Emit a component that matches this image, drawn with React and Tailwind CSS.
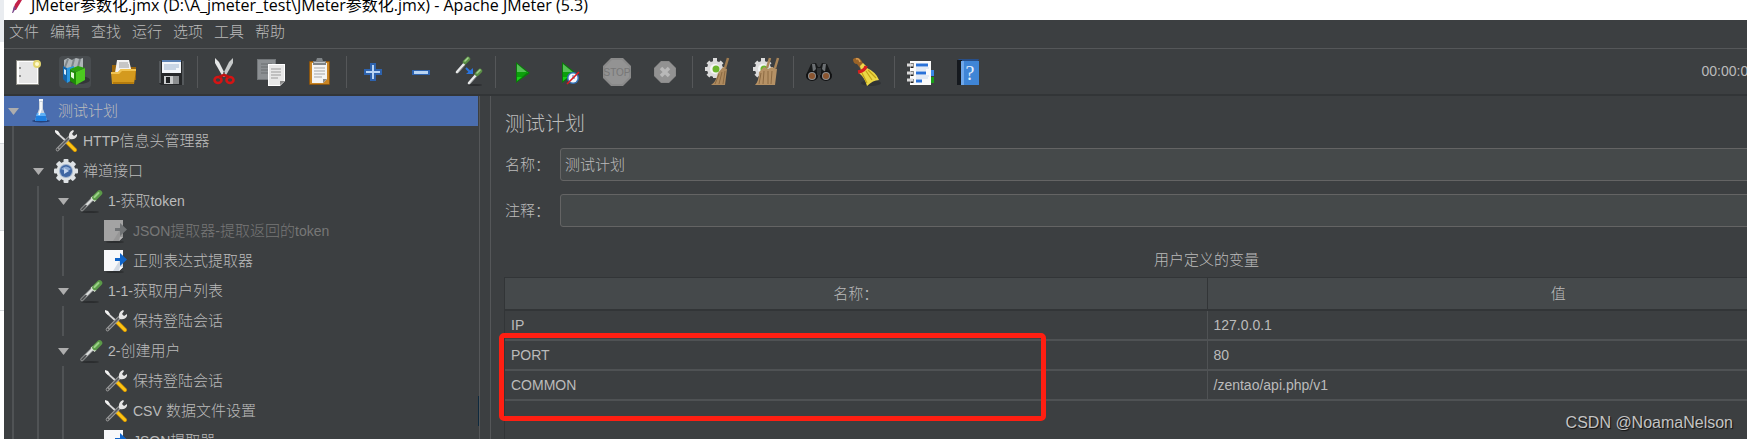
import clsx from "clsx";

const menus = ["文件", "编辑", "查找", "运行", "选项", "工具", "帮助"];

const treeRows = [
    { depth: 0, icon: "flask", label: "测试计划", open: true, selected: true },
    { depth: 1, icon: "tools", label: "HTTP信息头管理器" },
    { depth: 1, icon: "gear", label: "禅道接口", open: true },
    { depth: 2, icon: "dropper", label: "1-获取token", open: true },
    { depth: 3, icon: "extractor", label: "JSON提取器-提取返回的token", disabled: true },
    { depth: 3, icon: "extractor", label: "正则表达式提取器" },
    { depth: 2, icon: "dropper", label: "1-1-获取用户列表", open: true },
    { depth: 3, icon: "tools", label: "保持登陆会话" },
    { depth: 2, icon: "dropper", label: "2-创建用户", open: true },
    { depth: 3, icon: "tools", label: "保持登陆会话" },
    { depth: 3, icon: "tools", label: "CSV 数据文件设置", marked: true },
    { depth: 3, icon: "extractor", label: "JSON提取器" },
];

const variables = [
    { name: "IP", value: "127.0.0.1" },
    { name: "PORT", value: "80" },
    { name: "COMMON", value: "/zentao/api.php/v1" },
];

// Latin runs are set one size below the Chinese ones
function MixedText({ text }) {
    return text.split(/([\x21-\x7e]+)/).map((part, i) => (
        <span key={i} className={i % 2 ? "text-[14px]" : "text-[15px]"}>
            {part}
        </span>
    ));
}

function Svg({ size = 32, children }) {
    return (
        <svg
            width={size}
            height={size}
            viewBox={`0 0 ${size} ${size}`}
            className="block shrink-0"
            aria-hidden="true"
        >
            {children}
        </svg>
    );
}

/* Tree icons */

function FlaskIcon() {
    return (
        <Svg size={24}>
            <ellipse cx="12" cy="22" rx="9" ry="1.5" fill="#24427c" />
            <path d="M10 2h4v8l4 11q0 1-1 1H7q-1 0-1-1l4-11z" fill="#c9d3de" />
            <path d="M8 14h8l2 7q0 1-1 1H7q-1 0-1-1z" fill="#1f7fe0" />
            <path d="M8 14h8l1 3H7z" fill="#5fb0f5" />
            <path d="M10 0h4v2h-4z" fill="#f5f8fb" />
            <path d="M12 3v7l-2 6" stroke="#fff" strokeWidth="1.6" fill="none" />
        </Svg>
    );
}

function ToolsIcon() {
    return (
        <Svg size={24}>
            <path d="M2 3l10 9" stroke="#d9d9d9" strokeWidth="1.8" />
            <path d="M1 1l3 1 2 3-2 1-3-3z" fill="#f2f2f2" />
            <path d="M13 13l8 8" stroke="#c98a00" strokeWidth="4" strokeLinecap="round" />
            <path d="M13 13l8 8" stroke="#fcc414" strokeWidth="2.8" strokeLinecap="round" />
            <path d="M3.500 20.500L16 8" stroke="#9a9a9a" strokeWidth="3.600" strokeLinecap="round" />
            <path d="M5 19L15 9" stroke="#55585a" strokeWidth="1.400" />
            <circle cx="3.500" cy="20.500" r="1" fill="#3c3f41" />
            <path d="M15 9q-1-6 4-8l1 1-2 3 2 2 3-2 0 2q-2 4-7 3z" fill="#e4e4e4" />
        </Svg>
    );
}

function GearIcon() {
    return (
        <Svg size={24}>
            <g fill="#dfe3e6">
                <circle cx="12" cy="12" r="9.5" />
                <rect x="9.5" y="0" width="5" height="24" rx="1" />
                <rect x="0" y="9.5" width="24" height="5" rx="1" />
                <rect x="9.5" y="0" width="5" height="24" rx="1" transform="rotate(45 12 12)" />
                <rect x="9.5" y="0" width="5" height="24" rx="1" transform="rotate(-45 12 12)" />
            </g>
            <circle cx="12" cy="12" r="7" fill="#9fb2cc" />
            <circle cx="12" cy="12" r="6" fill="#3f66a3" />
            <path d="M7 10q5-5 10 0-4 3-10 0z" fill="#8daad3" />
            <path d="M10 9l5 3-5 3z" fill="#c3d5ee" />
        </Svg>
    );
}

function DropperIcon() {
    return (
        <Svg size={24}>
            <ellipse cx="11" cy="23" rx="9" ry="1" fill="#2b2d2f" />
            <path d="M3 20.500L13 10.500" stroke="#8a8c8d" strokeWidth="3.600" strokeLinecap="round" />
            <path d="M7 16.500L13 10.500" stroke="#dcdedd" strokeWidth="2.200" strokeLinecap="round" />
            <path d="M3 20.500l4-4" stroke="#4a4c4e" strokeWidth="1.600" strokeLinecap="round" />
            <path d="M12.500 8l4 4" stroke="#dfe8da" strokeWidth="2.600" />
            <path d="M16 8.500l4.500-4.500" stroke="#5b9a48" strokeWidth="5.500" strokeLinecap="round" />
            <path d="M15.500 8l4-4" stroke="#9ad186" strokeWidth="2" strokeLinecap="round" />
        </Svg>
    );
}

function ExtractorIcon({ disabled }) {
    return (
        <Svg size={24}>
            <ellipse cx="11" cy="23" rx="9" ry="1" fill="#2b2d2f" />
            <path d="M0 1h19v17l-4 4H0z" fill={disabled ? "#a3a3a3" : "#f7f8fa"} />
            <path d="M9 22L19 6v12l-4 4z" fill={disabled ? "#969696" : "#d3dae4"} />
            <path d="M15 22l1-4h3z" fill={disabled ? "#b5b5b5" : "#fff"} />
            <path
                d="M11 9h5V4l7 6.500-7 6.500v-5h-5z"
                fill={disabled ? "#707375" : "#1064c8"}
            />
        </Svg>
    );
}

/* Toolbar icons */

function NewIcon() {
    return (
        <Svg>
            <rect x="5" y="4" width="23" height="25" fill="#8e8e88" />
            <rect x="6" y="5" width="21" height="23" fill="#fff" />
            <rect x="8" y="6" width="18" height="21" fill="#e6e6e6" />
            <circle cx="9" cy="12" r="1" fill="#777" />
            <circle cx="9" cy="20" r="1" fill="#777" />
            <circle cx="26" cy="8" r="4" fill="#e3d671" />
            <circle cx="26" cy="8" r="2" fill="#fffbd0" />
        </Svg>
    );
}

function TemplatesIcon() {
    return (
        <Svg>
            <ellipse cx="20" cy="24" rx="11" ry="4" fill="#333638" />
            <path d="M5 4l4-2 4 2 4-2 4 1 3-1v10H5z" fill="#b0b6b9" />
            <path d="M9 3l-3 8M15 3l-2 8M21 3l-2 8" stroke="#7d8589" strokeWidth="2" />
            <path d="M4 10l4 2v15l-4-4z" fill="#1464a8" />
            <path d="M8 12l7-2v13l-7 4z" fill="#2b98e0" />
            <path d="M5 13l2 1v5l-2-1z" fill="#d7ecfa" />
            <path d="M11 13l6 3v13l-6-4z" fill="#1f8a08" />
            <path d="M17 16l9-4v12l-9 5z" fill="#4cc91f" />
            <path d="M11 13l8-3 7 2-9 4z" fill="#2ba30c" />
            <path d="M12 16l3 1v6l-3-2z" fill="#e3f8da" />
        </Svg>
    );
}

function OpenIcon() {
    return (
        <Svg>
            <path d="M5 9h8l2 2h14v13H5z" fill="#99650c" />
            <path d="M10 4h12l3 13H8z" fill="#f2f2f2" />
            <path d="M12 7h9M12 9h10M12 11h10" stroke="#9a9a9a" strokeWidth="1" />
            <path d="M4 16h7l3-3h15l-2 15H5z" fill="#d49a1e" />
            <path d="M4 16h7l3-3h15v2H15l-3 3H4z" fill="#f0c352" />
            <path d="M6 26h21l-.300 2H6z" fill="#b57c0e" />
        </Svg>
    );
}

function SaveIcon() {
    return (
        <Svg>
            <path d="M4 5h25v24H6l-2-2z" fill="#26282a" />
            <path d="M4 5h2v22H4zM27 5h2v24h-2z" fill="#55595c" />
            <rect x="7" y="4" width="19" height="13" fill="#f3f6fa" />
            <rect x="7" y="4" width="19" height="2" fill="#5c82b5" />
            <path d="M9 9h15M9 11h15M9 13h12" stroke="#9db4d0" strokeWidth="1" />
            <rect x="9" y="20" width="15" height="8" fill="#c9cbcc" />
            <rect x="11" y="21" width="4" height="6" fill="#202224" />
            <rect x="18" y="20" width="6" height="8" fill="#8b8e90" />
        </Svg>
    );
}

function CutIcon() {
    return (
        <Svg>
            <path d="M7 2l4 4 7 14-3 1L7 7z" fill="#e4e6e6" />
            <path d="M25 2l-4 4-7 14 3 1 8-14z" fill="#c6c9c9" />
            <circle cx="16" cy="17" r="1" fill="#555" />
            <ellipse cx="10" cy="24" rx="3.500" ry="3" fill="none" stroke="#d51414" strokeWidth="2.600" />
            <ellipse cx="22" cy="24" rx="3.500" ry="3" fill="none" stroke="#d51414" strokeWidth="2.600" />
            <path d="M11 21l5-2 5 2" stroke="#c01010" strokeWidth="2.600" fill="none" />
        </Svg>
    );
}

function CopyIcon() {
    return (
        <Svg>
            <rect x="1" y="3" width="19" height="21" fill="#73777a" />
            <rect x="2" y="4" width="17" height="19" fill="#8c9093" />
            <path d="M5 8h11M5 11h11M5 14h11M5 17h8" stroke="#6a6e70" strokeWidth="1" />
            <path d="M12 8h17v17l-5 5H12z" fill="#fff" />
            <path d="M13 9h15v15l-4 5H13z" fill="#e8e8e8" />
            <path d="M15 13h10M15 16h10M15 19h10M15 22h7" stroke="#9a9a9a" strokeWidth="1" />
            <path d="M24 29v-4h5z" fill="#8a8a8a" />
        </Svg>
    );
}

function PasteIcon() {
    return (
        <Svg>
            <rect x="5" y="5" width="21" height="24" rx="1" fill="#8a5510" />
            <rect x="6" y="6" width="19" height="22" fill="#c98524" />
            <path d="M8 7h15v16l-4 4H8z" fill="#f4f4f4" />
            <path d="M19 27v-4h4z" fill="#8b8b8b" />
            <path d="M10 12h11M10 15h11M10 18h11M10 21h8" stroke="#a5a5a5" strokeWidth="1" />
            <path d="M9 5h3l1-3h5l1 3h3v4H9z" fill="#7f8487" />
            <path d="M10 6h11v1H10z" fill="#c6cacc" />
        </Svg>
    );
}

function PlusIcon() {
    return (
        <Svg>
            <path d="M13 7h6v6h6v6h-6v6h-6v-6H7v-6h6z" fill="#2d62ad" />
            <path d="M15 9h2v6h6v2h-6v6h-2v-6H9v-2h6z" fill="#b8d4f3" />
        </Svg>
    );
}

function MinusIcon() {
    return (
        <Svg>
            <rect x="7" y="14" width="18" height="5" fill="#2d62ad" />
            <rect x="9" y="15" width="14" height="3" fill="#b8d4f3" />
        </Svg>
    );
}

function ToggleIcon() {
    return (
        <Svg>
            <ellipse cx="22" cy="29" rx="7" ry="1" fill="#2b2d2f" />
            <path d="M4 16l7-8M16 27l7-8" stroke="#e8eaea" strokeWidth="2.600" strokeLinecap="round" />
            <path d="M5 17l7-8M17 28l7-8" stroke="#8f9292" strokeWidth="1" />
            <path d="M12 6l3-3M24 18l3-3" stroke="#5a8f45" strokeWidth="4.500" strokeLinecap="round" />
            <path d="M12 5l3-3M24 17l3-3" stroke="#a3d08e" strokeWidth="1.600" strokeLinecap="round" />
            <path d="M13 12l4 4" stroke="#2b74dd" strokeWidth="2" />
            <path d="M20 12v6h-7z" fill="#2b74dd" />
        </Svg>
    );
}

function PlayShape() {
    return (
        <>
            <path d="M10 6l14 11-14 10z" fill="#0a7a0a" />
            <path d="M11 8l11 9H11z" fill="#55c155" />
            <path d="M11 16h11l-11 9z" fill="#0c9f0c" />
            <path d="M11 21h5l-5 4z" fill="#17cf17" />
        </>
    );
}

function StartIcon() {
    return (
        <Svg>
            <PlayShape />
        </Svg>
    );
}

function StartNoPausesIcon() {
    return (
        <Svg>
            <g transform="translate(-2 0)">
                <PlayShape />
            </g>
            <circle cx="19" cy="22" r="6" fill="#3572b8" />
            <circle cx="19" cy="22" r="4.500" fill="#f4f7fb" />
            <path d="M19 19v3h2" stroke="#3572b8" strokeWidth="1" fill="none" />
            <path d="M13 28l12-12" stroke="#dc1b1b" strokeWidth="1.600" />
        </Svg>
    );
}

function StopIcon() {
    return (
        <Svg>
            <path d="M9 2h12l8 8v12l-8 8H9l-8-8V10z" fill="#8a8a8a" />
            <path d="M10 4h10l7 7v10l-7 7H10l-7-7V11z" fill="#939393" />
            <text
                x="15"
                y="20"
                textAnchor="middle"
                fontSize="10"
                fill="#777"
                fontFamily="Liberation Sans, sans-serif"
            >
                STOP
            </text>
        </Svg>
    );
}

function ShutdownIcon() {
    return (
        <Svg>
            <path d="M11 5h8l7 7v8l-7 7h-8l-7-7v-8z" fill="#8a8a8a" />
            <path d="M11 6h8l6 6v8l-6 6h-8l-6-6v-8z" fill="#929292" />
            <path d="M11 12l8 8M19 12l-8 8" stroke="#b8b8b8" strokeWidth="3.500" />
        </Svg>
    );
}

function GearPart() {
    return (
        <>
            <g fill="#dcdcdc">
                <circle cx="12" cy="13" r="8" />
                <rect x="10" y="2" width="4" height="20" />
                <rect x="2" y="11" width="20" height="4" />
                <rect x="10" y="3" width="4" height="20" transform="rotate(45 12 13)" />
                <rect x="10" y="3" width="4" height="20" transform="rotate(-45 12 13)" />
            </g>
            <circle cx="12" cy="13" r="5" fill="#f5f5f5" />
            <circle cx="13" cy="13" r="3.500" fill="#6cb52d" />
        </>
    );
}

function ClearIcon() {
    return (
        <Svg>
            <GearPart />
            <path d="M25 2l-3 10" stroke="#a07c50" strokeWidth="2.500" />
            <path d="M15 17l5-6 4 2-2 16H8q5-3 7-12z" fill="#ae8a5e" />
            <path d="M16 18l-4 10M19 16l-3 12M22 15l-2 13" stroke="#8c6a42" strokeWidth="1" />
        </Svg>
    );
}

function ClearAllIcon() {
    return (
        <Svg>
            <GearPart />
            <path d="M19 2l-3 10M27 2l-3 10" stroke="#a98559" strokeWidth="2.500" />
            <path d="M8 16l5-5 4 2 4-2 5 2-2 16H4q4-4 4-13z" fill="#b59165" />
            <path d="M10 17L8 28M13 15l-1 13M17 15v13M21 15l-1 13" stroke="#8c6a42" strokeWidth="1" />
        </Svg>
    );
}

function SearchIcon() {
    return (
        <Svg>
            <path d="M7 8l5-1 2 4h2l2-4 5 1 5 11H2z" fill="#17191a" />
            <path d="M8 8h3l1 5-3 3zM22 8h-3l-1 5 3 3z" fill="#6c7073" />
            <ellipse cx="8" cy="20" rx="6" ry="5" fill="#101112" />
            <ellipse cx="22" cy="20" rx="6" ry="5" fill="#101112" />
            <circle cx="8" cy="20" r="4" fill="#8e8e8e" />
            <circle cx="22" cy="20" r="4" fill="#8e8e8e" />
            <circle cx="8" cy="20" r="3" fill="#8a5530" />
            <circle cx="22" cy="20" r="3" fill="#8a5530" />
            <rect x="13" y="12" width="4" height="7" fill="#303335" />
        </Svg>
    );
}

function BroomIcon() {
    return (
        <Svg>
            <ellipse cx="19" cy="27" rx="10" ry="3" fill="#303335" />
            <path d="M1 3q5-3 8 1l3 5-4 3-3-4q-4 0-4-5z" fill="#9a6327" />
            <path d="M4 3q3-1 4 3" stroke="#d79b52" strokeWidth="1.500" fill="none" />
            <path d="M11 7l4 4-6 4-1-5z" fill="#f0d84a" />
            <path d="M15 12q9 4 12 12-6 0-12 6-2-8-8-13z" fill="#ecd846" />
            <path d="M14 15l6 9M16 14l8 8M10 17l5 10" stroke="#c2a316" strokeWidth="1.200" />
            <path d="M6 16q7-1 8-6" stroke="#d81f1f" strokeWidth="3.400" fill="none" />
        </Svg>
    );
}

function FunctionHelperIcon() {
    return (
        <Svg>
            <rect x="22" y="14" width="7" height="6" fill="#3a87e8" />
            <rect x="22" y="21" width="7" height="6" fill="#179b17" />
            <rect x="5" y="5" width="21" height="24" fill="#fafafa" />
            <path d="M7 7v20" stroke="#222" strokeWidth="3" strokeDasharray="5 3" />
            <path d="M2 9h6M2 17h6M2 24h6" stroke="#d9d9d9" strokeWidth="3" />
            <path d="M11 9h12M11 17h10M11 25h6" stroke="#2a72d8" strokeWidth="3" />
            <path d="M11 12h13M11 14h10M11 20h13M11 22h12" stroke="#c9d9ef" strokeWidth="1" />
        </Svg>
    );
}

function HelpIcon() {
    return (
        <Svg>
            <path d="M4 5l2-2h20l-1 2z" fill="#274e88" />
            <rect x="4" y="4" width="5" height="25" fill="#15191e" />
            <rect x="8" y="5" width="18" height="24" fill="#3f85d6" />
            <rect x="8" y="5" width="3" height="24" fill="#6ea7ea" />
            <text
                x="17"
                y="24"
                textAnchor="middle"
                fontSize="20"
                fill="#e4effb"
                fontFamily="Liberation Serif, serif"
            >
                ?
            </text>
        </Svg>
    );
}

const toolGroups = [
    [
        { label: "新建", Icon: NewIcon },
        { label: "模板", Icon: TemplatesIcon, active: true },
        { label: "打开", Icon: OpenIcon },
        { label: "保存", Icon: SaveIcon },
    ],
    [
        { label: "剪切", Icon: CutIcon },
        { label: "复制", Icon: CopyIcon },
        { label: "粘贴", Icon: PasteIcon },
    ],
    [
        { label: "展开", Icon: PlusIcon },
        { label: "折叠", Icon: MinusIcon },
        { label: "切换", Icon: ToggleIcon },
    ],
    [
        { label: "启动", Icon: StartIcon },
        { label: "不停顿开始", Icon: StartNoPausesIcon },
        { label: "停止", Icon: StopIcon, disabled: true },
        { label: "关闭", Icon: ShutdownIcon, disabled: true },
    ],
    [
        { label: "清除", Icon: ClearIcon },
        { label: "清除全部", Icon: ClearAllIcon },
    ],
    [
        { label: "搜索", Icon: SearchIcon },
        { label: "重置搜索", Icon: BroomIcon },
    ],
    [
        { label: "函数助手", Icon: FunctionHelperIcon },
        { label: "帮助", Icon: HelpIcon },
    ],
];

const treeIcons = {
    flask: FlaskIcon,
    tools: ToolsIcon,
    gear: GearIcon,
    dropper: DropperIcon,
    extractor: ExtractorIcon,
};

function Toolbar() {
    return (
        <div className="flex h-[47px] items-center border-b-2 border-[#323537] pr-[167px]">
            <div className="-ml-px flex items-center">
                {toolGroups.map((group, i) => (
                    <div key={i} className="flex items-center">
                        {i > 0 && <span className="mx-0.5 h-8 w-px bg-[#555759]" />}
                        {group.map(({ label, Icon, active, disabled }) => (
                            <button
                                key={label}
                                type="button"
                                aria-label={label}
                                disabled={disabled}
                                className={clsx("mx-2 rounded-sm", active && "bg-[#484c4f]")}
                            >
                                <Icon />
                            </button>
                        ))}
                    </div>
                ))}
            </div>
            <span className="ml-auto text-[14px]">00:00:00</span>
        </div>
    );
}

function TreeRow({ row }) {
    const Icon = treeIcons[row.icon];

    return (
        <li
            role="treeitem"
            aria-level={row.depth + 1}
            aria-selected={!!row.selected}
            aria-expanded={row.open}
            className={clsx(
                "flex h-[30px] items-center border-r pl-1",
                row.marked ? "border-[#0d293e]" : "border-[#3c3f41]",
                row.selected && "bg-[#4b6eaf]",
                row.disabled && "text-[#777777]"
            )}
        >
            {Array.from({ length: row.depth }, (_, i) => (
                <span key={i} className="h-full w-[25px] shrink-0 pl-1">
                    <span className="block h-full w-0.5 bg-[#505355]" />
                </span>
            ))}
            <span className="w-[21px] shrink-0">
                {row.open && (
                    <button type="button" aria-label="折叠" className="block">
                        <svg width="11" height="7" viewBox="0 0 11 7" aria-hidden="true">
                            <path d="M0 0h11L5.500 7z" fill="#adadad" />
                        </svg>
                    </button>
                )}
            </span>
            <Icon disabled={row.disabled} />
            <span className="ml-[5px] whitespace-nowrap">
                <MixedText text={row.label} />
            </span>
        </li>
    );
}

function Field({ id, label, value }) {
    return (
        <div className="flex items-center">
            <label htmlFor={id} className="w-[55px] shrink-0 pt-0.5">
                {label}
            </label>
            <input
                id={id}
                type="text"
                defaultValue={value}
                className="h-[33px] min-w-0 flex-1 rounded-[3px] border border-[#646464] bg-[#45494a] px-1 pb-0.5 outline-none"
            />
        </div>
    );
}

function PlanPanel() {
    return (
        <main className="relative flex min-w-0 flex-1 flex-col border-l border-[#555759] pl-[13px] pr-3.5 pt-3">
            <h1 className="pl-px pt-px font-['Liberation_Serif','Noto_Sans_CJK_SC',serif] text-[20px] font-light leading-[30px]">
                测试计划
            </h1>

            <div className="mt-[9px] flex flex-col gap-[13px] pl-px">
                <Field id="plan-name" label="名称：" value="测试计划" />
                <Field id="plan-comment" label="注释：" value="" />
            </div>

            <h2 className="mt-[18px] text-center leading-[30px]">用户定义的变量</h2>

            <div className="mt-0.5 flex-1 border-l border-t border-[#323537]">
                <table className="w-full table-fixed border-collapse">
                    <thead>
                        <tr className="h-[32px] bg-[#45494b]">
                            <th className="border-b-2 border-r border-[#323537] p-0 pt-0.5 font-light">
                                名称：
                            </th>
                            <th className="border-b-2 border-[#323537] p-0 pt-0.5 font-light">
                                值
                            </th>
                        </tr>
                    </thead>
                    <tbody className="text-[14px]">
                        {variables.map((v) => (
                            <tr key={v.name} className="h-[30px] border-b-2 border-[#4f5254]">
                                <td className="border-r border-[#4f5254] p-0 pl-1.5">{v.name}</td>
                                <td className="p-0 pl-1.5">{v.value}</td>
                            </tr>
                        ))}
                    </tbody>
                </table>
            </div>

            {/* Highlight over the PORT and COMMON rows */}
            <div className="pointer-events-none absolute left-2 top-[237px] h-[88px] w-[547px] rounded-[5px] border-[5px] border-[#ff1f12]" />
        </main>
    );
}

export default function App() {
    return (
        <div className="relative flex h-screen overflow-hidden bg-white font-['Liberation_Sans','Noto_Sans_CJK_SC',sans-serif] text-[15px] font-light text-[#bbbbbb]">
            {/* Edge of the page behind the window */}
            <div className="flex w-1 shrink-0 flex-col">
                <div className="h-[42px] bg-[#e9ecf0]" />
                <div className="mt-[101px] h-[88px] border-y border-[#d5d8dc] bg-[#f0f1f2]" />
                <div className="mt-[79px] border-t border-[#d5d8dc]" />
            </div>

            {/* The window runs past the right edge of the screen */}
            <div className="-mr-44 flex min-w-0 flex-1 flex-col bg-[#3c3f41]">
                <header className="flex h-5 items-end overflow-hidden bg-white pl-[27px] font-['Open_Sans','Noto_Sans_CJK_SC',sans-serif] text-[16px] font-normal text-black">
                    <div className="relative w-full">
                        <svg
                            width="14"
                            height="14"
                            viewBox="0 0 14 14"
                            className="absolute -left-5 bottom-1.5"
                            aria-hidden="true"
                        >
                            <path d="M2 10l2-6 3-4h4L8 5l-3 5z" fill="#c4214a" />
                            <path d="M1 13l2-7 2 2-3 5z" fill="#7c4a8c" />
                        </svg>
                        <p className="whitespace-nowrap pb-1 leading-[22px]">
                            JMeter参数化.jmx (D:\A_jmeter_test\JMeter参数化.jmx) - Apache JMeter (5.3)
                        </p>
                    </div>
                </header>

                <nav className="flex h-[29px] items-center gap-[11px] border-b border-[#555759] pb-[3px] pl-[5px]">
                    {menus.map((menu) => (
                        <button key={menu} type="button">
                            {menu}
                        </button>
                    ))}
                </nav>

                <Toolbar />

                <div className="flex min-h-0 flex-1">
                    <ul
                        role="tree"
                        aria-label="测试计划"
                        className="w-[476px] shrink-0 overflow-hidden border-r border-[#555759]"
                    >
                        {treeRows.map((row, i) => (
                            <TreeRow key={i} row={row} />
                        ))}
                    </ul>
                    <div className="w-[10px] shrink-0" />
                    <PlanPanel />
                </div>
            </div>

            <p className="absolute bottom-[5px] right-3.5 text-[16px] leading-[22px] text-[#c4c4c4] [text-shadow:1px_1px_1px_#111]">
                CSDN @NoamaNelson
            </p>
        </div>
    );
}
